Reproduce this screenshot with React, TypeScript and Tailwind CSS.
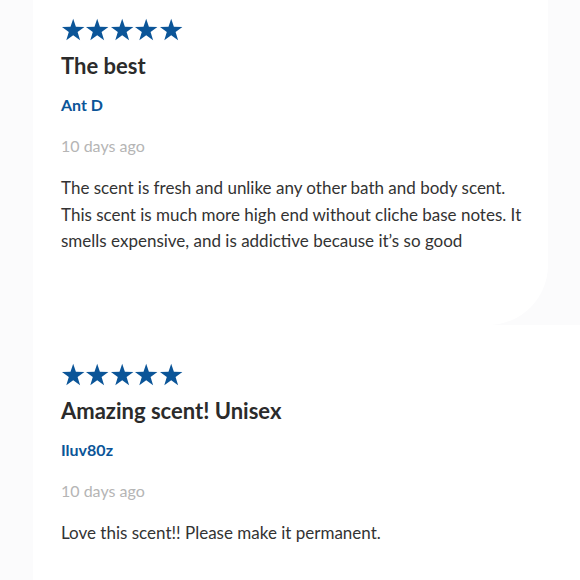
import React from 'react';

interface Review {
  id: number;
  rating: number;
  title: string;
  author: string;
  date: string;
  body: string;
}

const reviews: Review[] = [
  {
    id: 1,
    rating: 5,
    title: 'The best',
    author: 'Ant D',
    date: '10 days ago',
    body: 'The scent is fresh and unlike any other bath and body scent. This scent is much more high end without cliche base notes. It smells expensive, and is addictive because it’s so good',
  },
  {
    id: 2,
    rating: 5,
    title: 'Amazing scent! Unisex',
    author: 'Iluv80z',
    date: '10 days ago',
    body: 'Love this scent!! Please make it permanent.',
  },
];

const Star = () => (
  <svg viewBox="0 0 24 24" className="w-[24.4px] h-[24px]" aria-hidden="true">
    <polygon
      points="12,0.8 14.7,8.8 23.2,8.9 16.4,14 18.9,22.2 12,17.3 5.1,22.2 7.6,14 0.8,8.9 9.3,8.8"
      fill="#0b5598"
    />
  </svg>
);

const ReviewCard: React.FC<{ review: Review; first?: boolean }> = ({ review, first }) => (
  <div
    className={`bg-white pl-[28px] pr-6 ${
      first ? 'mr-[32px] rounded-br-[60px] pt-[18px] pb-[70px]' : 'pt-[38px] pb-10'
    }`}
  >
    {/* Stars */}
    <div className="flex">
      {Array.from({ length: review.rating }).map((_, i) => (
        <Star key={i} />
      ))}
    </div>

    <h3 className="mt-[10px] text-[22px] leading-[28px] font-bold text-[#2b2b2b]">{review.title}</h3>
    <p className="mt-[14px] text-[16px] leading-[22px] font-bold text-[#0b5598]">{review.author}</p>
    <p className="mt-[19px] text-[16px] leading-[22px] text-[#b5b5b5]">{review.date}</p>
    <p className="mt-[18px] text-[17px] leading-[26.5px] text-[#333333] max-w-[470px]">{review.body}</p>
  </div>
);

export default function App() {
  return (
    <div
      className="min-h-[580px] bg-[#fbfbfc] pl-[33px] overflow-hidden"
      style={{ fontFamily: '"Source Sans Pro", Lato, "Noto Sans", sans-serif' }}
    >
      {reviews.map((r, i) => (
        <ReviewCard key={r.id} review={r} first={i === 0} />
      ))}
    </div>
  );
}
